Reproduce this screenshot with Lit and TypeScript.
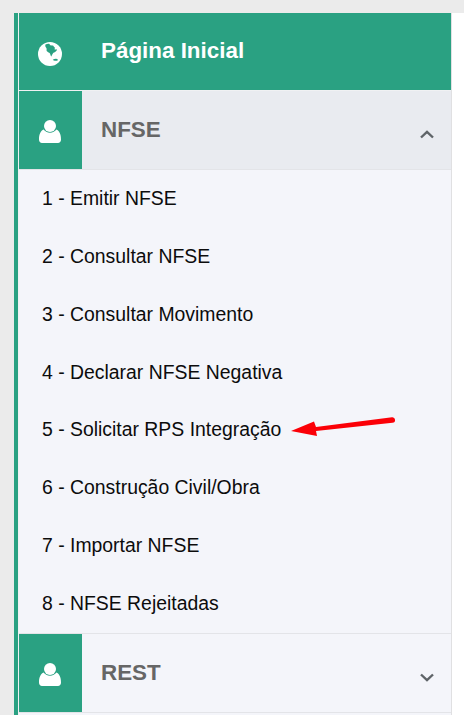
import { LitElement, html, css } from "lit";
import { customElement } from "lit/decorators.js";

const userIcon = html`<svg class="ico user" viewBox="0 0 22 23" aria-hidden="true"><circle cx="11" cy="6" r="6" fill="#fff"/><path d="M4.6 9.6C6 11.6 8.3 12.8 11 12.8s5-1.2 6.4-3.200C20.200 10.600 22 14.400 22 19.500c0 2.200-1.300 3.500-3 3.500H3c-1.700 0-3-1.300-3-3.500C0 14.400 1.800 10.600 4.600 9.600z" fill="#fff"/></svg>`;

const globeIcon = html`<svg class="ico globe" viewBox="0 0 24 24" aria-hidden="true"><circle cx="12" cy="12" r="12" fill="#fff"/><path d="M7.500 2.500c1.500-.8 3-.8 4-.6.600.5 0 1.200.9 1.300 1-.1 1.600.4 2.600.4.800.7.700 1.400 1.800 1.800.500.800-.600 1.200-.1 2 .800.500 1.300-.400 2-.2.500 1-.5 2-1.300 2.600-.900.700-1.900.500-2.400 1.500-.500 1-1.300 2-1.500 3.200-.8-.3-1.100-1.600-1.300-2.500-.3-1.200-1.500-1.300-2.300-2C9 9.500 8.200 8.500 8.600 7.500c.3-1-.5-1.500-1-2.400-.2-.9-.5-1.800-.1-2.600z" fill="#2aa182"/><path d="M14.800 17.800c1-.8 2.200-1.200 3.500-1.100.8.200 1.500.6 1.800 1.200-1 .9-2.200.9-3.300.8-.8 0-1.400-.4-2-.9z" fill="#2aa182"/></svg>`;

const chevron = (dir: "up" | "down") => html`<svg class="chev" viewBox="0 0 14 9" aria-hidden="true"><path d=${dir === "up" ? "M1 7.500 7 1.800l6 5.700" : "M1 1.500 7 7.200l6-5.700"} fill="none" stroke="#5f6468" stroke-width="2.400"/></svg>`;

const items = [
  "1 - Emitir NFSE",
  "2 - Consultar NFSE",
  "3 - Consultar Movimento",
  "4 - Declarar NFSE Negativa",
  "5 - Solicitar RPS Integração",
  "6 - Construção Civil/Obra",
  "7 - Importar NFSE",
  "8 - NFSE Rejeitadas",
];

@customElement("app-root")
export class AppRoot extends LitElement {
  static styles = css`
    :host {
      display: block;
      position: relative;
      height: 715px;
      overflow: hidden;
      background: #fff;
      font-family: "Liberation Sans", Arial, sans-serif;
    }
    .top { height: 13px; background: #ebebeb; }
    .wrap { display: flex; height: 702px; }
    .gutter { width: 14px; flex: none; background: #ebebeb; }
    .accent { width: 4px; flex: none; background: #2aa182; }
    .sep { width: 1px; flex: none; background: #f0f1f3; }
    .menu {
      width: 432px;
      flex: none;
      display: flex;
      flex-direction: column;
      background: #f4f5fa;
    }
    .edge { width: 1px; flex: none; background: #e0e0e2; }
    .row {
      display: flex;
      align-items: stretch;
      height: 77px;
      flex: none;
      border-bottom: 1px solid #e3e4e8;
    }
    .row.home { background: #2aa182; border-bottom-color: #f0f1f3; }
    .row.open { height: 78px; background: #e9ebf0; }
    .row.rest { height: 78px; border-top: 1px solid #e3e4e8; }
    .icon-box {
      width: 63px;
      flex: none;
      background: #2aa182;
      display: flex;
      align-items: center;
      justify-content: center;
    }
    .ico { display: block; }
    .user { width: 22px; height: 23px; margin-top: 2px; margin-left: -2px; }
    .globe { width: 24px; height: 24px; margin-left: -2px; margin-top: 4px; }
    .label {
      flex: 1;
      padding-left: 19px;
      padding-bottom: 1px;
      display: flex;
      align-items: center;
      font-size: 22.4px;
      font-weight: 700;
      color: #666;
    }
    .home .label { color: #fff; padding-bottom: 2px; }
    .chev { width: 14px; height: 9px; margin: 39px 17px 0 0; flex: none; align-self: flex-start; }
    .items { display: flex; flex-direction: column; flex: none; height: 463px; }
    .item {
      height: 57.750px;
      flex: none;
      padding-left: 23px;
      display: flex;
      align-items: center;
      font-size: 19.400px;
      color: #0c0c0c;
    }
    .arrow {
      position: absolute;
      left: 284px;
      top: 410px;
      width: 115px;
      height: 30px;
    }
  `;

  render() {
    return html`
      <div class="top"></div>
      <div class="wrap">
        <div class="gutter"></div>
        <div class="accent"></div>
        <div class="sep"></div>
        <nav class="menu">
          <div class="row home">
            <div class="icon-box">${globeIcon}</div>
            <div class="label">Página Inicial</div>
          </div>
          <div class="row open">
            <div class="icon-box">${userIcon}</div>
            <div class="label">NFSE</div>
            ${chevron("up")}
          </div>
          <div class="items">
            ${items.map((t) => html`<div class="item">${t}</div>`)}
          </div>
          <div class="row rest">
            <div class="icon-box">${userIcon}</div>
            <div class="label">REST</div>
            ${chevron("down")}
          </div>
        </nav>
        <div class="edge"></div>
      </div>
      <svg class="arrow" viewBox="0 0 115 30" aria-hidden="true">
        <path d="M7 21 30 11.500l2 5.500 76-9.800a1.900 1.900 0 0 1 .5 5.600L32 21l1 5z" fill="#fb0007"/>
      </svg>
    `;
  }
}
